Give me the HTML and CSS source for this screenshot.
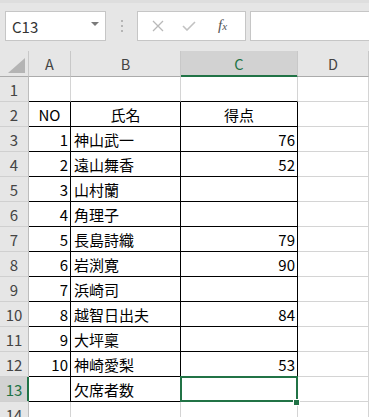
FILE: index.html
```html
<!DOCTYPE html>
<html lang="ja">
<head>
    <meta charset="UTF-8">
    <meta name="viewport" content="width=device-width, initial-scale=1.0">
    <title>得点表</title>
    <link rel="stylesheet" href="styles.css">
</head>
<body>
    <div class="barra">
        <div class="caixaNome">
            <span>C13</span>
            <svg class="seta" width="8" height="4" viewBox="0 0 8 4"><path d="M0 0H8L4 4Z" fill="#7a7a7a"/></svg>
        </div>
        <div class="alca">
            <svg width="2" height="12" viewBox="0 0 2 12"><rect y="0" width="2" height="2" fill="#b5b5b5"/><rect y="5" width="2" height="2" fill="#b5b5b5"/><rect y="10" width="2" height="2" fill="#b5b5b5"/></svg>
        </div>
        <div class="botoes">
            <svg class="btn" width="12" height="12" viewBox="0 0 12 12"><path d="M1 1L11 11M11 1L1 11" stroke="#b9b9b9" stroke-width="1.3"/></svg>
            <svg class="btn" width="14" height="10" viewBox="0 0 14 10"><path d="M1 5L5 9L13 1" stroke="#c2c2c2" stroke-width="1.6" fill="none"/></svg>
            <span class="fx">f<small>x</small></span>
        </div>
        <div class="formula"></div>
    </div>

    <div class="planilha">
        <div class="cab canto"><span class="tri"></span></div>
        <div class="cab">A</div>
        <div class="cab">B</div>
        <div class="cab sel">C</div>
        <div class="cab">D</div>

        <div class="lin">1</div>
        <div class="cel topo"></div>
        <div class="cel topo"></div>
        <div class="cel topo"></div>
        <div class="cel"></div>

        <div class="lin">2</div>
        <div class="cel b meio">NO</div>
        <div class="cel b meio">氏名</div>
        <div class="cel b meio">得点</div>
        <div class="cel"></div>

        <div class="lin">3</div>
        <div class="cel b num">1</div>
        <div class="cel b">神山武一</div>
        <div class="cel b num">76</div>
        <div class="cel"></div>

        <div class="lin">4</div>
        <div class="cel b num">2</div>
        <div class="cel b">遠山舞香</div>
        <div class="cel b num">52</div>
        <div class="cel"></div>

        <div class="lin">5</div>
        <div class="cel b num">3</div>
        <div class="cel b">山村蘭</div>
        <div class="cel b num"></div>
        <div class="cel"></div>

        <div class="lin">6</div>
        <div class="cel b num">4</div>
        <div class="cel b">角理子</div>
        <div class="cel b num"></div>
        <div class="cel"></div>

        <div class="lin">7</div>
        <div class="cel b num">5</div>
        <div class="cel b">長島詩織</div>
        <div class="cel b num">79</div>
        <div class="cel"></div>

        <div class="lin">8</div>
        <div class="cel b num">6</div>
        <div class="cel b">岩渕寛</div>
        <div class="cel b num">90</div>
        <div class="cel"></div>

        <div class="lin">9</div>
        <div class="cel b num">7</div>
        <div class="cel b">浜崎司</div>
        <div class="cel b num"></div>
        <div class="cel"></div>

        <div class="lin">10</div>
        <div class="cel b num">8</div>
        <div class="cel b">越智日出夫</div>
        <div class="cel b num">84</div>
        <div class="cel"></div>

        <div class="lin">11</div>
        <div class="cel b num">9</div>
        <div class="cel b">大坪稟</div>
        <div class="cel b num"></div>
        <div class="cel"></div>

        <div class="lin">12</div>
        <div class="cel b num">10</div>
        <div class="cel b">神崎愛梨</div>
        <div class="cel b num">53</div>
        <div class="cel"></div>

        <div class="lin sel">13</div>
        <div class="cel b num"></div>
        <div class="cel b">欠席者数</div>
        <div class="cel b ativa"><span class="moldura"></span><span class="alcaPreench"></span></div>
        <div class="cel"></div>

        <div class="lin">14</div>
        <div class="cel"></div>
        <div class="cel"></div>
        <div class="cel"></div>
        <div class="cel"></div>
    </div>
</body>
</html>
```

FILE: styles.css
```css
html, body {
    margin: 0;
    padding: 0;
    height: 417px;
    overflow: hidden;
    background-color: #ffffff;
    font-family: "Noto Sans CJK JP", "Noto Sans", sans-serif;
}
.barra {
    height: 51px;
    box-sizing: border-box;
    padding: 11px 0 0 5px;
    background-color: #e6e6e6;
    border-top: 3px solid #dedede;
    padding-top: 8px;
    display: flex;
    align-items: flex-start;
}
.caixaNome {
    width: 101px;
    height: 30px;
    box-sizing: border-box;
    background-color: #fff;
    border: 1px solid #c6c6c6;
    display: flex;
    align-items: center;
    justify-content: space-between;
    padding: 0 6px 0 6px;
    font-size: 15px;
    color: #333;
}
.caixaNome span {
    margin-top: 1px;
}
.seta {
    margin-bottom: 4px;
}
.alca {
    width: 31px;
    height: 30px;
    display: flex;
    align-items: center;
    justify-content: center;
}
.botoes {
    width: 109px;
    height: 30px;
    box-sizing: border-box;
    background-color: #fff;
    border: 1px solid #c6c6c6;
    display: flex;
    align-items: center;
    padding-left: 14px;
}
.botoes .btn:nth-child(2) {
    margin-left: 18px;
}
.fx {
    margin-left: 22px;
    font-family: "Liberation Serif", serif;
    font-style: italic;
    font-size: 15px;
    color: #555;
    margin-top: -2px;
}
.fx small {
    font-size: 11px;
}
.formula {
    flex: 1;
    margin-left: 4px;
    height: 30px;
    box-sizing: border-box;
    background-color: #fff;
    border: 1px solid #c6c6c6;
    border-right: none;
}
.planilha {
    display: grid;
    grid-template-columns: 29px 42px 110px 117px 1fr;
    grid-template-rows: 26px repeat(14, 25px);
    font-size: 15px;
}
.planilha > div {
    box-sizing: border-box;
    border-right: 1px solid #d4d4d4;
    border-bottom: 1px solid #d4d4d4;
    display: flex;
    align-items: center;
}
.planilha > .cab {
    background-color: #e6e6e6;
    border-right-color: #c8c8c8;
    border-bottom-color: #ababab;
    justify-content: center;
    color: #444;
    font-size: 14.5px;
}
.planilha > .canto {
    position: relative;
}
.tri {
    position: absolute;
    right: 3px;
    bottom: 3px;
    width: 0;
    height: 0;
    border-left: 17px solid transparent;
    border-bottom: 15px solid #b4b4b4;
}
.planilha > .cab.sel {
    background-color: #d2d2d2;
    color: #217346;
    border-bottom-color: #217346;
    box-shadow: inset 0 -1px #217346;
}
.planilha > .lin {
    background-color: #e6e6e6;
    border-right-color: #bdbdbd;
    border-bottom-color: #d0d0d0;
    justify-content: center;
    color: #444;
    padding-top: 1px;
}
.planilha > .lin.sel {
    background-color: #d2d2d2;
    color: #217346;
    box-shadow: inset -1px 0 #217346;
    border-right-color: #217346;
}
.planilha > .cel {
    padding: 1px 3px 0 3px;
    color: #000;
    white-space: nowrap;
}
.planilha > .topo {
    border-bottom-color: #000;
}
.planilha > .b {
    border-right-color: #000;
    border-bottom-color: #000;
}
.planilha > .meio {
    justify-content: center;
}
.planilha > .num {
    justify-content: flex-end;
    padding-right: 2px;
}
.planilha > .ativa {
    position: relative;
}
.moldura {
    position: absolute;
    top: -1px;
    left: -1px;
    right: -1px;
    bottom: -1px;
    border: 2px solid #217346;
}
.alcaPreench {
    position: absolute;
    right: -2px;
    bottom: -4px;
    width: 5px;
    height: 5px;
    background-color: #217346;
    box-shadow: 0 0 0 1px #fff;
}
```
